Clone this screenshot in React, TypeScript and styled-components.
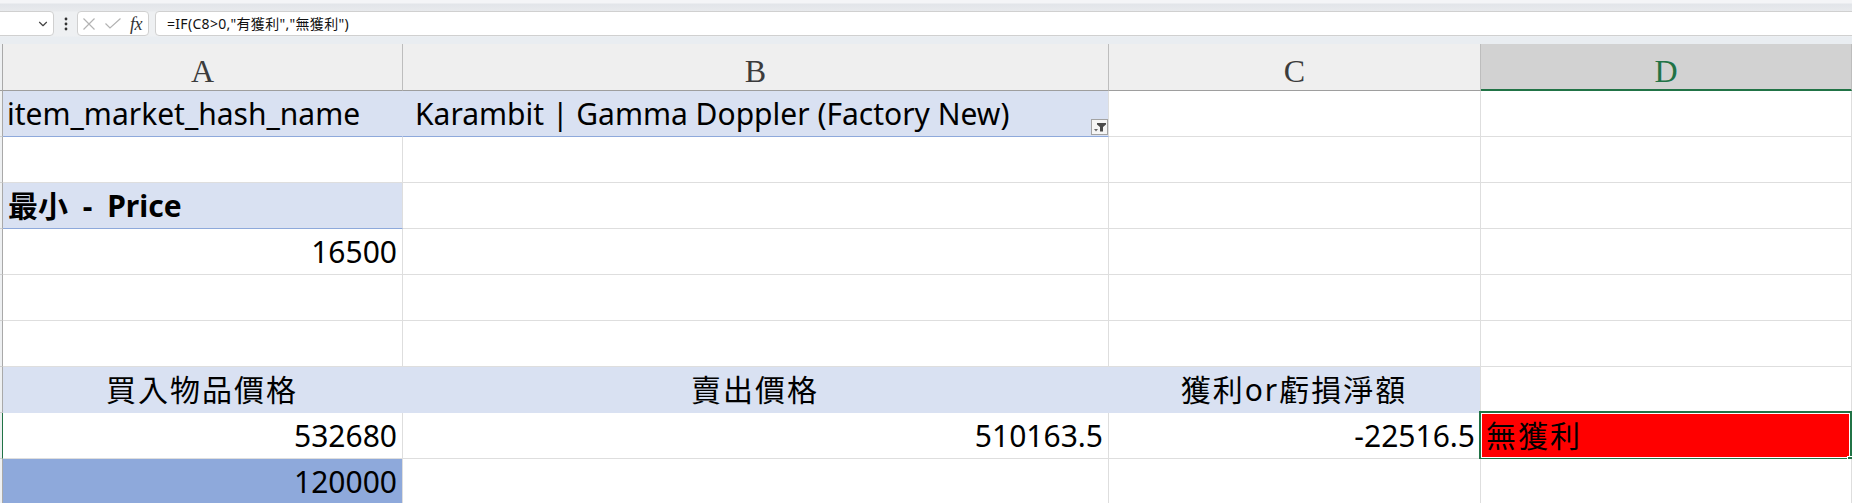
import React from 'react';
import styled, { createGlobalStyle } from 'styled-components';
import { ChevronDown } from 'lucide-react';

const GRID = '#dedede';
const PIVOT = '#d9e1f2';
const PIVOT_LINE = '#8ea9db';
const PIVOT_DARK = '#8ea9db';
const GREEN = '#217346';

const Global = createGlobalStyle`
  html, body { margin: 0; padding: 0; background: #ffffff; }
  body {
    width: 1852px;
    height: 503px;
    overflow: hidden;
    font-family: "Noto Sans", "Noto Sans CJK TC", sans-serif;
  }
  #root { width: 1852px; }
`;

const Page = styled.div`
  display: flex;
  flex-direction: column;
  width: 1852px;
  height: 503px;
  overflow: hidden;
`;

const TopBar = styled.div`
  flex: none;
  height: 44px;
  box-sizing: border-box;
  display: flex;
  align-items: flex-start;
  padding-top: 11px;
  background: linear-gradient(
    to bottom,
    #f4f5f7 0px,
    #f4f5f7 3px,
    #e2e5e9 4px,
    #e8eaed 11px,
    #eef0f2 12px,
    #eef0f2 36px,
    #e9edf1 37px,
    #e9edf1 44px
  );
`;

const Box = styled.div`
  height: 25px;
  box-sizing: border-box;
  background: #ffffff;
  border: 1px solid #d0d0d0;
  border-radius: 4px;
  display: flex;
  align-items: center;
  flex: none;
`;

const NameBox = styled(Box)`
  width: 64px;
  margin-left: -10px;
  justify-content: flex-end;
  padding-right: 3px;
  color: #444;
`;

const Dots = styled.div`
  flex: none;
  width: 4px;
  height: 25px;
  margin: 0 9px 0 10px;
  display: flex;
  align-items: center;
  justify-content: center;
`;

const FuncBox = styled(Box)`
  width: 72px;
  padding-left: 5px;
  gap: 10px;
`;

const Fx = styled.span`
  font-family: "Liberation Serif", "DejaVu Serif", serif;
  font-style: italic;
  font-size: 18px;
  line-height: 20px;
  color: #333;
  margin-left: -1px;
  letter-spacing: -0.5px;
`;

const FormulaBox = styled(Box)`
  flex: 1;
  margin-left: 6px;
  margin-right: -6px;
  padding-left: 11px;
  font-family: "Noto Sans", "Noto Sans CJK TC", sans-serif;
  font-size: 14px;
  letter-spacing: 0.3px;
  line-height: 23px;
  color: #111;
  white-space: nowrap;
`;

const Sheet = styled.div`
  display: grid;
  grid-template-columns: 3px 400px 706px 372px 1fr;
  grid-template-rows: 47px;
  grid-auto-rows: 46px;
  flex: 1;
  overflow: hidden;
`;

const Stub = styled.div<{ $active?: boolean; $head?: boolean }>`
  box-sizing: border-box;
  background: #eef0f2;
  border-right: 1px solid ${(p) => (p.$active ? GREEN : '#a9a9a9')};
  border-bottom: 1px solid ${(p) => (p.$head ? '#9e9e9e' : '#d0d0d0')};
`;

const ColHead = styled.div<{ $active?: boolean }>`
  box-sizing: border-box;
  display: flex;
  justify-content: center;
  align-items: flex-end;
  padding-bottom: ${(p) => (p.$active ? '0px' : '1px')};
  background: ${(p) => (p.$active ? '#d2d2d2' : '#efefef')};
  border-right: 1px solid #bdbdbd;
  border-bottom: ${(p) => (p.$active ? `2px solid ${GREEN}` : '1px solid #9e9e9e')};
  color: ${(p) => (p.$active ? GREEN : '#3c3c3c')};
  font-family: "Liberation Serif", "DejaVu Serif", serif;
  font-size: 32px;
  line-height: 36px;
`;

type Align = 'left' | 'right' | 'center';

const Cell = styled.div<{
  $fill?: string;
  $align?: Align;
  $bold?: boolean;
  $hideRight?: boolean;
  $bottom?: string;
  $indent?: number;
  $cjk?: boolean;
  $wide?: boolean;
}>`
  position: relative;
  box-sizing: border-box;
  display: flex;
  align-items: flex-end;
  justify-content: ${(p) =>
    p.$align === 'right' ? 'flex-end' : p.$align === 'center' ? 'center' : 'flex-start'};
  padding: 0 5px 2px ${(p) => (p.$indent != null ? p.$indent : 4)}px;
  background: ${(p) => p.$fill || '#ffffff'};
  border-right: 1px solid ${(p) => (p.$hideRight && p.$fill ? p.$fill : GRID)};
  border-bottom: 1px solid ${(p) => p.$bottom || (p.$fill ? p.$fill : GRID)};
  font-size: 30px;
  line-height: 40px;
  font-weight: ${(p) => (p.$bold ? 700 : 400)};
  letter-spacing: ${(p) => (p.$cjk ? '2px' : '0')};
  word-spacing: ${(p) => (p.$wide ? '7px' : '0')};
  color: #000;
  white-space: pre;
`;

const FilterBtn = styled.div`
  position: absolute;
  right: 0;
  bottom: 1px;
  width: 17px;
  height: 16px;
  box-sizing: border-box;
  border: 1px solid #a3a3a3;
  background: #f5f5f5;
  display: flex;
`;

const Selection = styled.div`
  position: absolute;
  top: -2px;
  left: -2px;
  right: -1px;
  bottom: -2px;
  border: 2px solid ${GREEN};
  box-shadow: inset 0 0 0 1px #ffffff;
  pointer-events: none;
`;

const Handle = styled.div`
  position: absolute;
  right: -3px;
  bottom: -4px;
  width: 5px;
  height: 5px;
  background: ${GREEN};
  border-left: 1px solid #fff;
  border-top: 1px solid #fff;
`;

type CellSpec = {
  text?: string;
  fill?: string;
  align?: Align;
  bold?: boolean;
  hideRight?: boolean;
  bottom?: string;
  indent?: number;
  cjk?: boolean;
  wide?: boolean;
  filter?: boolean;
  selected?: boolean;
};

const E: CellSpec = {};

const rows: CellSpec[][] = [
  [
    { text: 'item_market_hash_name', fill: PIVOT, hideRight: true, bottom: PIVOT_LINE },
    { text: 'Karambit | Gamma Doppler (Factory New)', fill: PIVOT, bottom: PIVOT_LINE, indent: 12, filter: true },
    E,
    E,
  ],
  [E, E, E, E],
  [{ text: '最小 - Price', fill: PIVOT, bold: true, bottom: PIVOT_LINE, wide: true, indent: 5 }, E, E, E],
  [{ text: '16500', align: 'right' }, E, E, E],
  [E, E, E, E],
  [E, E, E, E],
  [
    { text: '買入物品價格', fill: PIVOT, align: 'center', hideRight: true, cjk: true },
    { text: '賣出價格', fill: PIVOT, align: 'center', hideRight: true, cjk: true },
    { text: '獲利or虧損淨額', fill: PIVOT, align: 'center', cjk: true },
    E,
  ],
  [
    { text: '532680', align: 'right' },
    { text: '510163.5', align: 'right' },
    { text: '-22516.5', align: 'right' },
    { text: '無獲利', fill: '#ff0000', cjk: true, selected: true, indent: 5 },
  ],
  [{ text: '120000', align: 'right', fill: PIVOT_DARK }, E, E, E],
];

const FilterIcon = () => (
  <svg width="15" height="14" viewBox="0 0 15 14">
    <path d="M2 9h4l-2 2.5z" fill="#666" />
    <path d="M5 3h9v1.5l-3 2.5v4.5h-3v-4.5l-3-2.5z" fill="#4a4a4a" />
  </svg>
);

export default function App() {
  const cols = ['A', 'B', 'C', 'D'];
  return (
    <Page>
      <Global />
      <TopBar>
        <NameBox>
          <ChevronDown size={14} strokeWidth={2} />
        </NameBox>
        <Dots>
          <svg width="4" height="14" viewBox="0 0 4 14">
            <circle cx="2" cy="2" r="1.4" fill="#333" />
            <circle cx="2" cy="7" r="1.4" fill="#333" />
            <circle cx="2" cy="12" r="1.4" fill="#333" />
          </svg>
        </Dots>
        <FuncBox>
          <svg width="12" height="12" viewBox="0 0 12 12">
            <path d="M0.5 0.5L11.5 11.5M11.5 0.5L0.5 11.5" stroke="#b3b3b3" strokeWidth="1.2" />
          </svg>
          <svg width="16" height="11" viewBox="0 0 16 11">
            <path d="M0.5 5.5L5 10L15.5 0.5" stroke="#b3b3b3" strokeWidth="1.2" fill="none" />
          </svg>
          <Fx>fx</Fx>
        </FuncBox>
        <FormulaBox>=IF(C8&gt;0,"有獲利","無獲利")</FormulaBox>
      </TopBar>
      <Sheet>
        <Stub $head />
        {cols.map((c) => (
          <ColHead key={c} $active={c === 'D'}>
            {c}
          </ColHead>
        ))}
        {rows.map((row, ri) => (
          <React.Fragment key={ri}>
            <Stub $active={ri === 7} />
            {row.map((cell, ci) => (
              <Cell
                key={ci}
                $fill={cell.fill}
                $align={cell.align}
                $bold={cell.bold}
                $hideRight={cell.hideRight}
                $bottom={cell.bottom}
                $indent={cell.indent}
                $cjk={cell.cjk}
                $wide={cell.wide}
              >
                {cell.text}
                {cell.filter && (
                  <FilterBtn>
                    <FilterIcon />
                  </FilterBtn>
                )}
                {cell.selected && (
                  <Selection>
                    <Handle />
                  </Selection>
                )}
              </Cell>
            ))}
          </React.Fragment>
        ))}
      </Sheet>
    </Page>
  );
}
